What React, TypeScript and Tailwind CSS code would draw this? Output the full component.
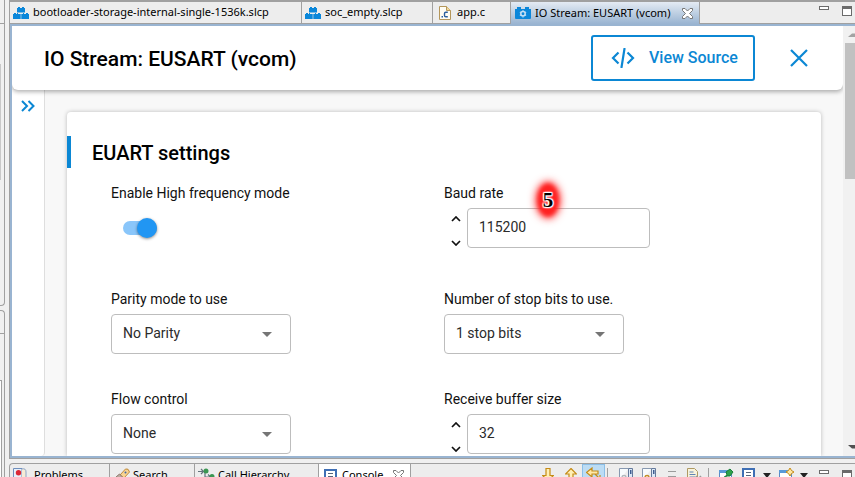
import { useId, useState, type ReactNode } from "react";

const uiFont = "font-['Noto_Sans','Open_Sans',sans-serif]";

function BlocksIcon() {
  return (
    <svg viewBox="0 0 16 12" className="h-3 w-4 shrink-0" fill="#0b87da" aria-hidden="true">
      <path d="M4 1h1V0h2v1h2V0h2v1h1v4.500H4zM0 7h1V6h2v1h1V6h1v1h2.700v5H0zM8.300 7H10V6h1v1h2V6h2v1h1v5H8.300z" />
    </svg>
  );
}

function CFileIcon() {
  return (
    <svg viewBox="0 0 12 14" className="h-3.5 w-3 shrink-0" aria-hidden="true">
      <path d="M.5.500h7l4 4v9H.5z" fill="#fffdf3" stroke="#b4965a" />
      <path d="M7.500.500v4h4" fill="#f1d99c" stroke="#b4965a" />
      <path d="M8.800 6.200H6.800q-1.300 0-1.300 1.300v2q0 1.300 1.300 1.300h2" fill="none" stroke="#2b5f9e" strokeWidth="1.400" />
      <path d="M2.500 10H4v1.500H2.500z" fill="#2b5f9e" />
    </svg>
  );
}

function GearFolderIcon() {
  return (
    <svg viewBox="0 0 16 12" className="h-3 w-4 shrink-0" aria-hidden="true">
      <path d="M0 2h2V0h4v2h4V0h4v2h2v9q0 1-1 1H1q-1 0-1-1z" fill="#0b87da" />
      <circle cx="8" cy="6.800" r="2.200" fill="none" stroke="#c8e1f5" strokeWidth="1.500" />
      <path d="M8 3.200v1M8 9.400v1M4.900 5l.8.500M10.300 8.100l.8.500M4.900 8.600l.8-.5M10.300 5.500l.8-.5" stroke="#c8e1f5" strokeWidth="1.200" />
    </svg>
  );
}

function CloseTabIcon() {
  return (
    <svg viewBox="0 0 11 11" className="size-[11px]" fill="#fff" stroke="#777" aria-hidden="true">
      <path d="M.5.500h2.500l2.500 2.500L8 .500h2.500v2L7.500 5.500l3 3v2H8L5.500 8 3 10.500H.5v-2l3-3-3-3z" />
    </svg>
  );
}

function WindowButtons() {
  return (
    <>
      <button aria-label="Minimize" className="mr-[13px] h-1 w-2.5 shrink-0 border border-[#6b6b6b] bg-white" />
      <button aria-label="Maximize" className="mr-[3px] h-2.5 w-2.5 shrink-0 border border-t-[3px] border-[#6b6b6b] bg-white" />
    </>
  );
}

function Tab({ icon, label, className }: { icon: ReactNode; label: string; className: string }) {
  return (
    <button className={`flex shrink-0 items-center border-r border-[#a0a0a0] text-left whitespace-nowrap ${className}`}>
      {icon}
      <span>{label}</span>
    </button>
  );
}

function EditorTabs() {
  return (
    <div className={`flex h-[26px] shrink-0 border-t-2 border-b-2 border-t-[#a0a0a0] border-b-[#99b4d1] bg-[#ededed] text-[11px] text-black ${uiFont}`}>
      <div className="flex border-b border-[#a0a0a0]">
        <Tab icon={<BlocksIcon />} label="bootloader-storage-internal-single-1536k.slcp" className="w-[292px] gap-1 pl-[3px]" />
        <Tab icon={<BlocksIcon />} label="soc_empty.slcp" className="w-[131px] gap-1 pl-[3px]" />
        <Tab icon={<CFileIcon />} label="app.c" className="w-[78px] gap-1.5 pl-1.5" />
      </div>
      <div className="flex w-[189px] shrink-0 items-center gap-1 border-r border-[#a0a0a0] bg-linear-to-b from-[#e4ebf3] to-[#99b4d1] pl-1 whitespace-nowrap">
        <GearFolderIcon />
        <span className="w-[143px]">IO Stream: EUSART (vcom)</span>
        <button aria-label="Close tab"><CloseTabIcon /></button>
      </div>
      <div className="flex grow justify-end border-b border-[#a0a0a0] pt-1">
        <WindowButtons />
      </div>
    </div>
  );
}

function Header() {
  return (
    <header className="relative z-10 flex h-16 shrink-0 items-center rounded-b-md bg-white px-8 shadow-[0_2px_4px_rgba(0,0,0,0.3)]">
      <h1 className="grow pt-0.5 text-[21px] leading-8 font-medium text-black">IO Stream: EUSART (vcom)</h1>
      <button className="mr-8 flex h-[46px] w-[164px] shrink-0 items-center gap-3.5 rounded-[3px] border-2 border-[#0b87d4] pl-[18px] text-[16px] font-medium whitespace-nowrap text-[#0b87d4]">
        <svg viewBox="0 0 24 20" className="h-5 w-6" fill="none" stroke="currentColor" strokeWidth="2.200" aria-hidden="true">
          <path d="M7.500 4.500 2 10l5.500 5.500M16.500 4.500 22 10l-5.500 5.500M13.600 0l-3.200 20" />
        </svg>
        View Source
      </button>
      <button aria-label="Close" className="flex size-6 items-center justify-center text-[#0b87d4]">
        <svg viewBox="0 0 18 18" className="size-[18px]" stroke="currentColor" strokeWidth="2.200" aria-hidden="true">
          <path d="m1 1 16 16M17 1 1 17" />
        </svg>
      </button>
    </header>
  );
}

const labelClass = "text-[14px] leading-[18px] text-[#111]";

function SelectField({ label, value }: { label: string; value: string }) {
  const id = useId();
  return (
    <div className="flex flex-col items-start gap-1.5">
      <label htmlFor={id} className={labelClass}>{label}</label>
      <div className="relative w-[180px]">
        <select id={id} className="h-10 w-full appearance-none rounded-[4px] border border-[#bdbdbd] bg-white pr-10 pb-0.5 pl-[11px] text-[14px] text-[#2b2b2b]">
          <option>{value}</option>
        </select>
        <svg viewBox="0 0 10 5" className="pointer-events-none absolute top-[18px] right-[19px] h-[5px] w-2.5" fill="#757575" aria-hidden="true">
          <path d="M0 0h10L5 5z" />
        </svg>
      </div>
    </div>
  );
}

function NumberField({ label, initial, children }: { label: string; initial: number; children?: ReactNode }) {
  const id = useId();
  const [value, setValue] = useState(initial);
  return (
    <div className="relative flex flex-col items-start gap-1.5">
      <label htmlFor={id} className={labelClass}>{label}</label>
      <div className="flex">
        <div className="flex w-[23px] flex-col gap-2.5 pt-1 pl-[7px]">
          <button aria-label={`Increase ${label}`} onClick={() => setValue(value + 1)} className="flex h-3.5 w-2.5 items-center">
            <svg viewBox="0 0 10 6" className="h-1.5 w-2.5" fill="none" stroke="#111" strokeWidth="1.700"><path d="m1 5 4-4 4 4" /></svg>
          </button>
          <button aria-label={`Decrease ${label}`} onClick={() => setValue(value - 1)} className="flex h-3.5 w-2.5 items-center">
            <svg viewBox="0 0 10 6" className="h-1.5 w-2.5" fill="none" stroke="#111" strokeWidth="1.700"><path d="m1 1 4 4 4-4" /></svg>
          </button>
        </div>
        <input
          id={id}
          inputMode="numeric"
          value={value}
          onChange={(e) => setValue(Number(e.target.value) || 0)}
          className="h-10 w-[183px] rounded-[4px] border border-[#bdbdbd] bg-white pb-0.5 pl-[11px] text-[14px] text-[#2b2b2b]"
        />
      </div>
      {children}
    </div>
  );
}

function StepMarker() {
  return (
    <div className="absolute -top-1 left-[90px] flex h-10 w-7 items-center justify-center">
      <div className="absolute inset-0.5 rounded-[50%] bg-[#ff2020] blur-[4px]" />
      <div className="absolute inset-1 rounded-[50%] bg-[#ff2020] blur-[2px]" />
      <span className="relative font-['Liberation_Serif',serif] text-[21px] leading-5 font-bold text-black [text-shadow:1px_1px_1px_#fff,-1px_-1px_1px_#fff,1px_-1px_1px_#fff,-1px_1px_1px_#fff,0_0_2px_#fff,0_0_3px_#fff]">5</span>
    </div>
  );
}

function Settings() {
  return (
    <section className="mx-[22px] mt-[22px] grow rounded-t-[4px] bg-white pt-6 shadow-[0_0_4px_rgba(0,0,0,0.25)]">
      <h2 className="flex h-8 items-center border-l-4 border-[#0b87d4] pt-0.5 pl-[21px] text-[20px] font-medium text-black">EUART settings</h2>
      <div className="mt-4 grid grid-cols-2 gap-y-9 px-11">
        <div className="flex min-h-[70px] flex-col items-start gap-4">
          <label htmlFor="hf-mode" className={labelClass}>Enable High frequency mode</label>
          <div className="ml-3 flex h-5 w-[34px] items-center">
            <input
              id="hf-mode"
              type="checkbox"
              role="switch"
              defaultChecked
              className="flex h-3.5 w-[34px] appearance-none items-center rounded-full bg-[#bbb] before:size-5 before:shrink-0 before:rounded-full before:bg-[#2196f3] before:shadow-[0_1px_3px_rgba(0,0,0,0.45)] checked:justify-end checked:bg-[#8ac6fa]"
            />
          </div>
        </div>
        <NumberField label="Baud rate" initial={115200}>
          <StepMarker />
        </NumberField>
        <SelectField label="Parity mode to use" value="No Parity" />
        <SelectField label="Number of stop bits to use." value="1 stop bits" />
        <SelectField label="Flow control" value="None" />
        <NumberField label="Receive buffer size" initial={32} />
      </div>
    </section>
  );
}

function Scrollbar() {
  return (
    <div className="flex w-3 shrink-0 flex-col bg-[#f1f1f1] pl-0.5" aria-hidden="true">
      <svg viewBox="0 0 10 17" className="h-[17px] w-2.5" fill="#a3a3a3"><path d="M3 11h7V7.500h-3z" /></svg>
      <div className="h-[136px] bg-[#c1c1c1]" />
      <div className="grow" />
      <svg viewBox="0 0 10 17" className="h-[17px] w-2.5" fill="#505050"><path d="M3 6h7v3.500h-3z" /></svg>
    </div>
  );
}

function ProblemsIcon() {
  return (
    <svg viewBox="0 0 14 14" className="size-3.5 shrink-0" aria-hidden="true">
      <path d="M.5.500H9v13H.5z" fill="#e8f0fa" stroke="#6f8fbd" />
      <path d="M9 1q4-1 4 3v9H9" fill="#f6ecd6" stroke="#8ea5c8" />
      <circle cx="5.500" cy="4.800" r="2.700" fill="#dc2836" />
      <path d="M2 10h6" stroke="#e1b75a" strokeWidth="2" />
    </svg>
  );
}

function SearchIcon() {
  return (
    <svg viewBox="0 0 14 14" className="size-3.5 shrink-0" aria-hidden="true">
      <path d="m4 7 5.500-6q3-1 4 3L8 10z" fill="#f8d492" stroke="#c08a3a" />
      <path d="m3.500 6 5 5-3 3H0V9z" fill="#b9aaa0" stroke="#8f7a6c" />
      <circle cx="9.500" cy="4.500" r="1" fill="#3d67a8" />
    </svg>
  );
}

function HierarchyIcon() {
  return (
    <svg viewBox="0 0 17 14" className="h-3.5 w-[17px] shrink-0" aria-hidden="true">
      <path d="M0 3.500h5M3 1l2.500 2.500L3 6M7 4v5h5M10 6.500 12.500 9 10 11.500" fill="none" stroke="#63737c" strokeWidth="1.200" />
      <circle cx="8" cy="3" r="2.500" fill="#3b9652" />
      <circle cx="14" cy="8.500" r="2.500" fill="#3b9652" />
    </svg>
  );
}

function ConsoleIcon() {
  return (
    <svg viewBox="0 0 13 13" className="size-[13px] shrink-0" aria-hidden="true">
      <path d="M1 1h11v11H1z" fill="#fff" stroke="#3f6fb5" strokeWidth="2" />
      <path d="M4 4.500h5M4 7.500h5" stroke="#56657c" />
    </svg>
  );
}

function DownTriangle() {
  return (
    <svg viewBox="0 0 8 5" className="h-[5px] w-2" fill="#222" aria-hidden="true"><path d="M0 0h8L4 5z" /></svg>
  );
}

function WindowIcon({ children }: { children?: ReactNode }) {
  return (
    <svg viewBox="0 0 16 14" className="h-3.5 w-4" aria-hidden="true">
      <path d="M1.500 2.500h12v10h-12z" fill="#fff" stroke="#5a8ac6" />
      <path d="M1 2h13v3H1z" fill="#5a9ad8" />
      {children}
    </svg>
  );
}

function LockedDocIcon({ gold = false }: { gold?: boolean }) {
  return (
    <svg viewBox="0 0 14 14" className="size-3.5" aria-hidden="true">
      <path d="M.5 13V.500h9" fill="#f7fbfd" stroke="#8798b0" />
      <path d="M9.500.500h4v13h-4z" fill="#dbe9f7" stroke="#64799b" />
      <path d="M11 2h1.500v4H11z" fill="#405e91" />
      <path d="M3 14V9.500q0-2 2-2t2 2V14" fill="#fff" stroke={gold ? "#c28d25" : "#b0b7bd"} strokeWidth="1.500" />
    </svg>
  );
}

const tool = "flex h-[22px] w-[23px] shrink-0 items-start justify-center pt-1";

function BottomPanel() {
  return (
    <div className={`mt-1 flex h-[30px] shrink-0 rounded-tl border-t border-l border-[#a0a0a0] bg-[#ededed] text-[11px] text-black ${uiFont}`}>
      <Tab icon={<ProblemsIcon />} label="Problems" className="h-[22px] w-[100px] gap-[7px] pl-[3px]" />
      <Tab icon={<SearchIcon />} label="Search" className="h-[22px] w-[85px] gap-[3px] pl-[6px]" />
      <Tab icon={<HierarchyIcon />} label="Call Hierarchy" className="h-[22px] w-[124px] gap-[3px] pl-[3px]" />
      <div className="flex h-[22px] w-[92px] shrink-0 items-center border-r border-[#a0a0a0] bg-white pl-[5px]">
        <ConsoleIcon />
        <span className="ml-[5px] w-[51px]">Console</span>
        <button aria-label="Close Console"><CloseTabIcon /></button>
      </div>
      <div className="flex grow justify-end">
        <button aria-label="Next" className={tool}>
          <svg viewBox="0 0 12 13" className="h-[13px] w-3"><path d="M4 .500h4v7h3.500L6 12.500.500 7.500H4z" fill="#ffefb5" stroke="#c58b16" strokeWidth="1.200" /></svg>
        </button>
        <button aria-label="Previous" className={tool}>
          <svg viewBox="0 0 12 13" className="h-[13px] w-3"><path d="M6 .500 11.500 6H8v6.500H4V6H.500z" fill="#ffefb5" stroke="#c58b16" strokeWidth="1.200" /></svg>
        </button>
        <button aria-label="Link output" className="flex h-[22px] w-[23px] shrink-0 justify-center border border-[#8bbfe8] bg-[#bcdcf4] pt-0.5">
          <svg viewBox="0 0 16 14" className="h-3.5 w-4"><path d="M.5 5.500 6 1v3h6v3H6v3zM9 7l4 4M14 8v5H9" fill="#ffe9a8" stroke="#c58b16" strokeWidth="1.200" /></svg>
        </button>
        <span className="mt-1 ml-0.5 h-4 w-px bg-[#a0a0a0]" />
        <button aria-label="Clear console" className={`ml-1.5 ${tool}`}><LockedDocIcon /></button>
        <button aria-label="Scroll lock" className={tool}><LockedDocIcon gold /></button>
        <button aria-label="Word wrap" className={tool}>
          <svg viewBox="0 0 10 10" className="mt-0.5 size-2.5"><path d="M1 1.500h8M1 6.500h8" stroke="#9b9b9b" /></svg>
        </button>
        <button aria-label="Copy" className={tool}>
          <svg viewBox="0 0 15 14" className="h-3.5 w-[15px]"><path d="M.5.500h7l3 3v10H.5z" fill="#f8f3dc" stroke="#af9a63" /><path d="M2.500 4h4M2.500 6.500h6M2.500 9h6" stroke="#5f83b5" /><path d="m9 8 5 5M14 8l-5 5" stroke="#999" strokeWidth="1.500" /></svg>
        </button>
        <span className="mt-1 ml-0.5 h-4 w-px bg-[#a0a0a0]" />
        <button aria-label="Pin console" className={`ml-[5px] ${tool}`}>
          <WindowIcon><path d="m5 10 4-3-1-3 4-3 3 3-3 4-3 0z" fill="#2fa34c" stroke="#19803a" /></WindowIcon>
        </button>
        <button aria-label="Display console" className={tool}><ConsoleIcon /></button>
        <button aria-label="Choose console" className="flex w-3.5 shrink-0 justify-center pt-[9px]"><DownTriangle /></button>
        <button aria-label="Open console" className={tool}>
          <WindowIcon><path d="m12 0 1.500 2.500L16 4l-2.500 1.500L12 8l-1.500-2.500L8 4l2.500-1.500z" fill="#ffe7a1" stroke="#c58b16" /></WindowIcon>
        </button>
        <button aria-label="Open menu" className="mr-2 flex w-3.5 shrink-0 justify-center pt-[9px]"><DownTriangle /></button>
        <div className="flex shrink-0 pt-1.5"><WindowButtons /></div>
      </div>
    </div>
  );
}

export default function App() {
  return (
    <div className="flex h-screen overflow-hidden bg-[#f0f0f0] font-['Roboto',sans-serif]">
      <div className="flex w-[9px] shrink-0 flex-col gap-1 pr-1">
        <div className="h-[306px] rounded-br border-r border-b border-[#a0a0a0] pt-[23px]">
          <div className="h-[157px] border-t border-[#a0a0a0] pt-10">
            <div className="h-full w-px bg-[#c8c8c8]" />
          </div>
        </div>
        <div className="grow rounded-tr border-t border-r border-[#a0a0a0] pt-[22px]">
          <div className="h-full border-t border-[#a0a0a0] pt-[46px]">
            <div className="h-full w-0.5 border-t border-r border-[#a0a0a0] bg-white" />
          </div>
        </div>
      </div>
      <div className="-mb-4 flex min-w-0 grow flex-col">
        <div className="flex min-h-0 grow flex-col border-b border-l border-[#a0a0a0]">
          <EditorTabs />
          <div className="flex min-h-0 grow border-b-2 border-l-2 border-[#99b4d1] bg-[#f8f8f8]">
            <main className="flex min-w-0 grow flex-col overflow-hidden">
              <Header />
              <div className="flex min-h-0 grow">
                <aside className="w-[33px] shrink-0 rounded-br border-r border-[#dedede] bg-white pt-2.5 pl-[9px]">
                  <button aria-label="Expand sidebar" className="block">
                    <svg viewBox="0 0 14 12" className="h-3 w-3.5" fill="none" stroke="#0b87d4" strokeWidth="2"><path d="m1 1 5 5-5 5M7.500 1l5 5-5 5" /></svg>
                  </button>
                </aside>
                <Settings />
              </div>
            </main>
            <Scrollbar />
          </div>
        </div>
        <BottomPanel />
      </div>
    </div>
  );
}
